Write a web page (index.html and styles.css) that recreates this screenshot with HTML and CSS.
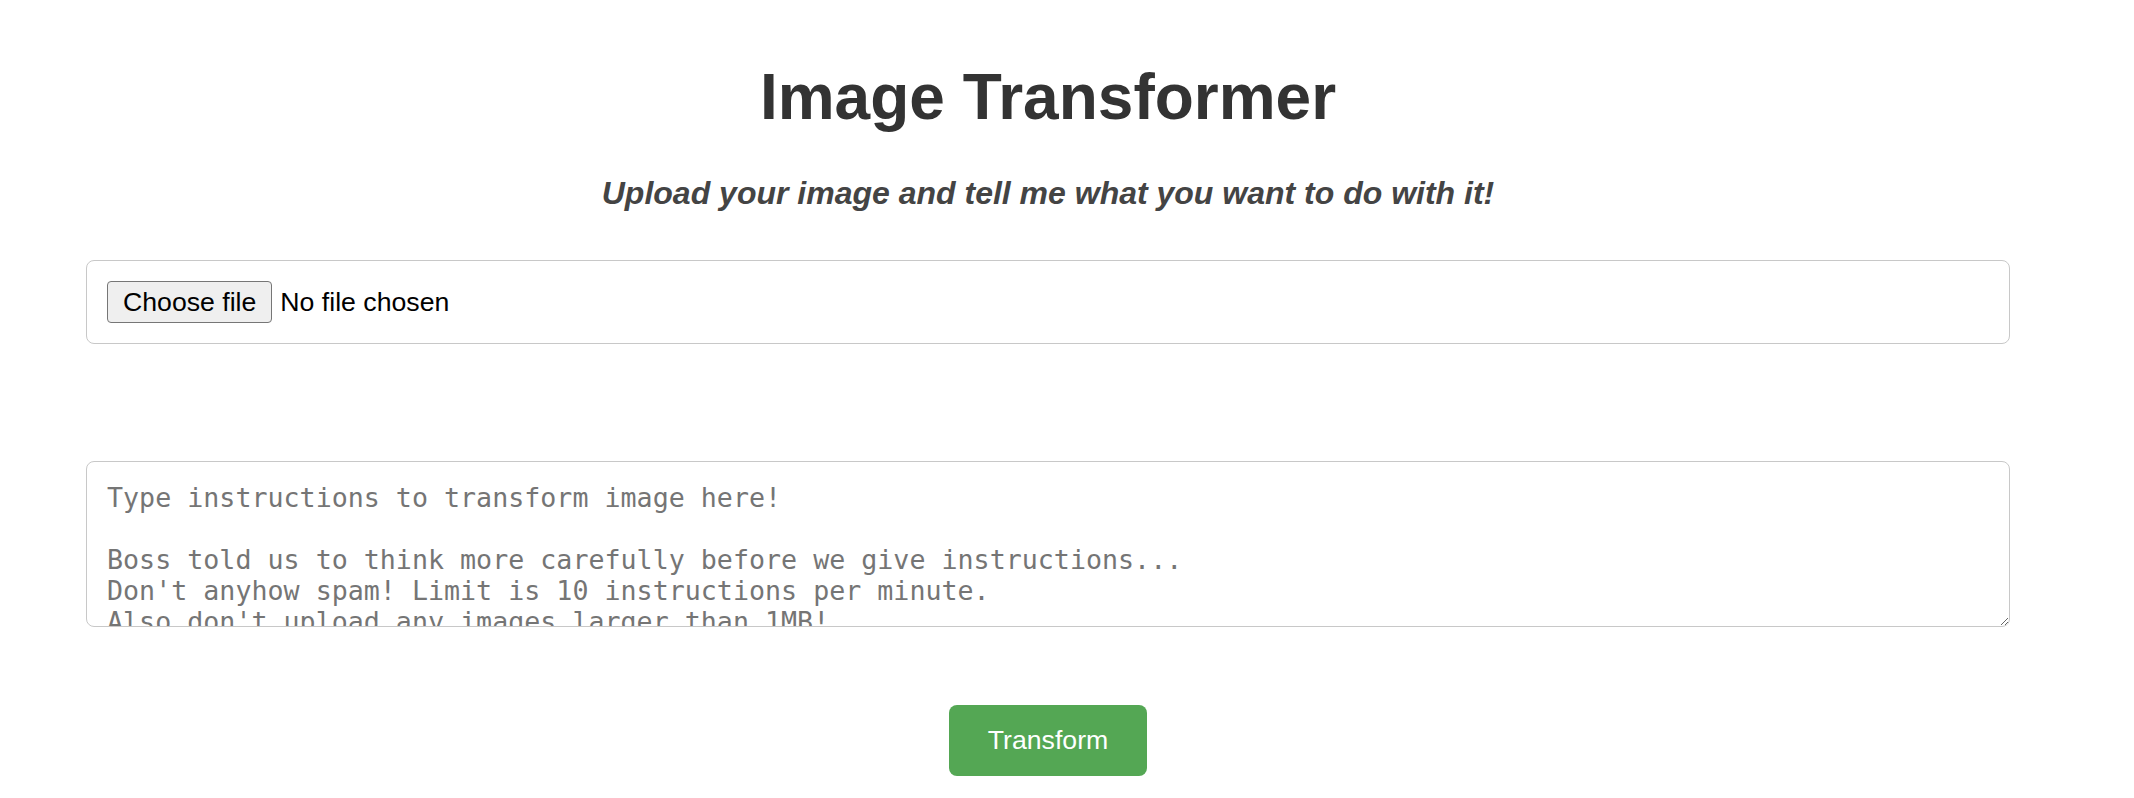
FILE: index.html
```html
<!DOCTYPE html>
<html lang="en">
<head>
<meta charset="utf-8">
<title>Image Transformer</title>
<link rel="stylesheet" href="styles.css">
</head>
<body>
<main class="app">
  <h1 class="title">Image Transformer</h1>
  <p class="subtitle">Upload your image and tell me what you want to do with it!</p>
  <label class="file-box">
    <input class="file-native" type="file" accept="image/*">
    <span class="file-btn">Choose file</span>
    <span class="file-name">No file chosen</span>
  </label>
  <textarea class="instructions" placeholder="Type instructions to transform image here!&#10;&#10;Boss told us to think more carefully before we give instructions...&#10;Don't anyhow spam! Limit is 10 instructions per minute.&#10;Also don't upload any images larger than 1MB!"></textarea>
  <button class="transform-btn" type="button">Transform</button>
</main>
</body>
</html>
```

FILE: styles.css
```css
html, body {
  margin: 0;
  padding: 0;
  background: #ffffff;
}

body {
  font-family: "Liberation Sans", Arial, sans-serif;
}

.app {
  margin-left: 86px;
  width: 1924px;
  display: flex;
  flex-direction: column;
  align-items: center;
}

.title {
  margin: 60px 0 0;
  font-size: 64px;
  line-height: 74px;
  font-weight: 700;
  color: #333333;
}

.subtitle {
  margin: 41px 0 0;
  font-size: 32px;
  line-height: 37px;
  font-weight: 700;
  font-style: italic;
  color: #444444;
}

.file-box {
  display: flex;
  align-items: center;
  box-sizing: border-box;
  align-self: stretch;
  margin: 48px 0 0;
  padding: 20px;
  border: 1.5px solid #c8c8c8;
  border-radius: 8px;
  font-size: 26.67px;
  color: #000000;
  background: #ffffff;
  cursor: pointer;
}

.file-native {
  display: none;
}

.file-btn {
  line-height: 32px;
  padding: 4px 15px;
  border: 1.33px solid #767676;
  border-radius: 4px;
  background: #efefef;
  color: #000000;
}

.file-name {
  margin-left: 8px;
  line-height: 32px;
}

.instructions {
  display: block;
  box-sizing: border-box;
  align-self: stretch;
  margin: 117px 0 0;
  height: 166px;
  padding: 20px;
  border: 1.5px solid #c8c8c8;
  border-radius: 8px;
  font-family: "DejaVu Sans Mono", monospace;
  font-size: 26.67px;
  line-height: 31px;
  overflow: hidden;
  resize: both;
}

.instructions::placeholder {
  color: #757575;
}

.transform-btn {
  margin: 78px 0 0;
  padding: 20px 39px;
  border: none;
  border-radius: 8px;
  background: #54a754;
  color: #ffffff;
  font-family: "Liberation Sans", Arial, sans-serif;
  font-size: 26.67px;
  line-height: 30.6px;
  cursor: pointer;
}
```
